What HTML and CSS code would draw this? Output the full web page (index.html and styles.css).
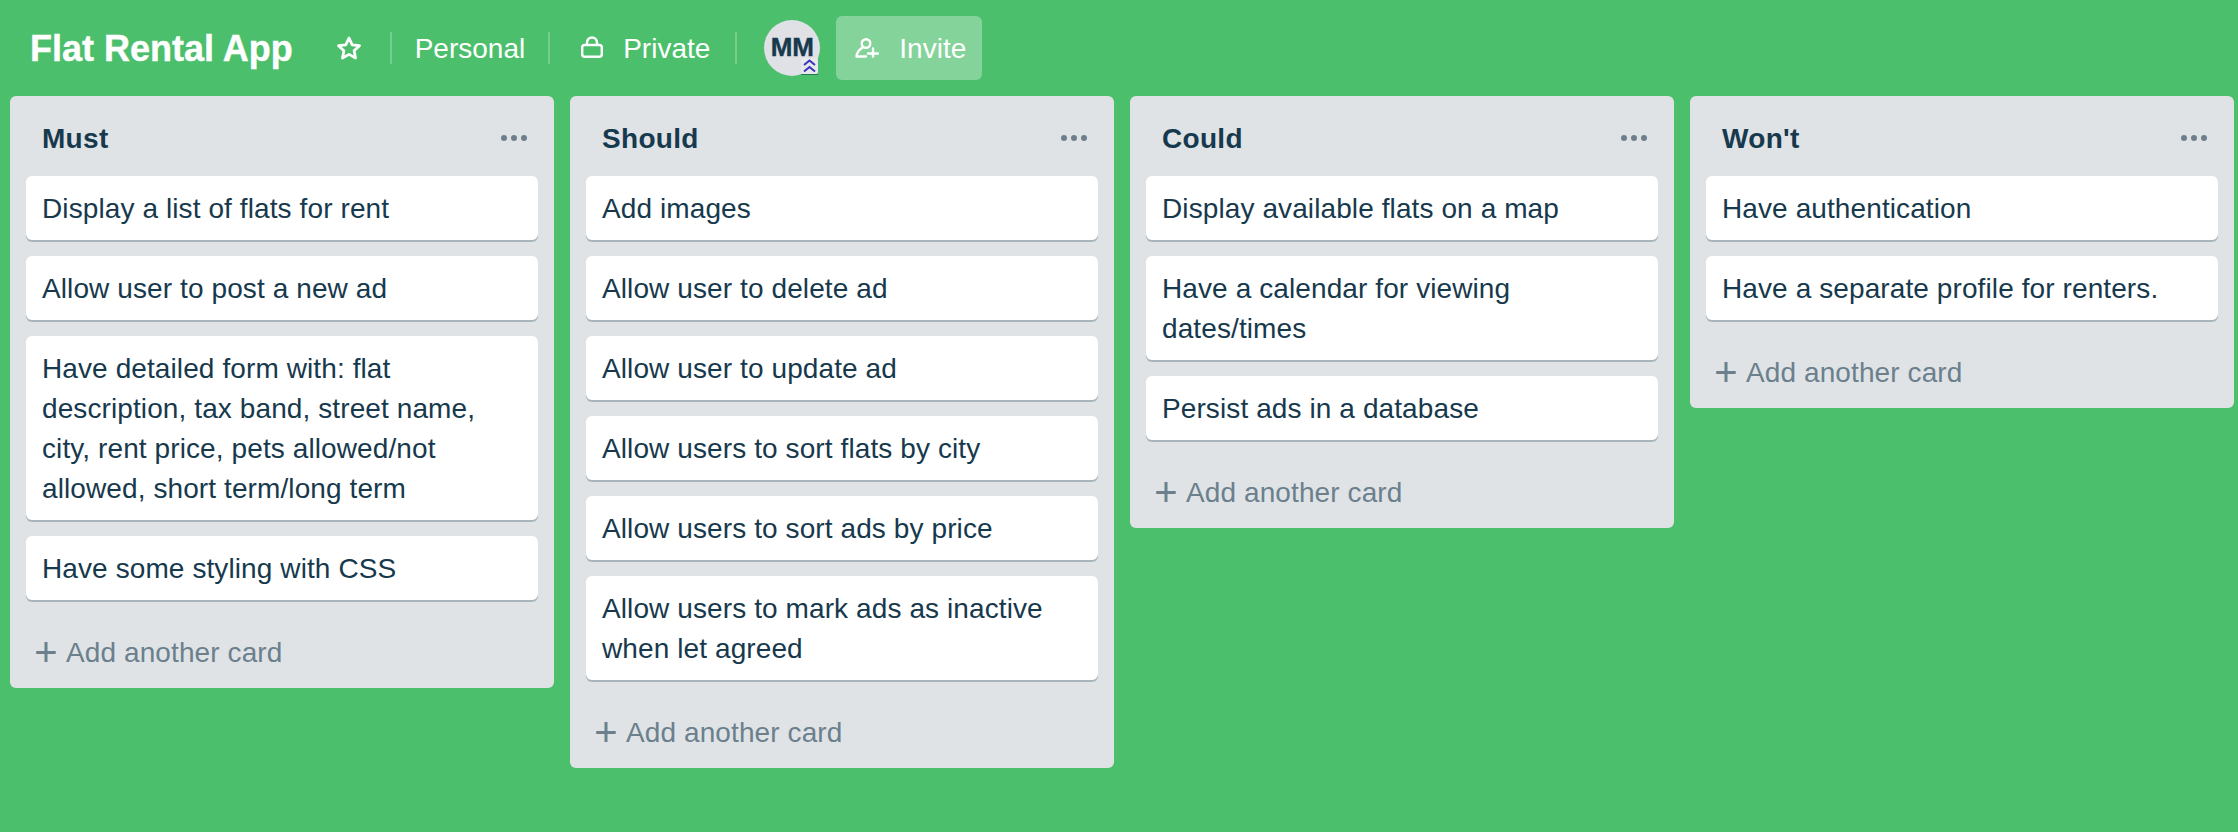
FILE: index.html
```html
<!DOCTYPE html>
<html lang="en">
<head>
  <meta charset="UTF-8">
  <title>Flat Rental App</title>
  <link rel="stylesheet" href="styles.css">
</head>
<body>
  <header class="board-header">
    <h1 class="board-title">Flat Rental App</h1>
    <svg class="icon star" viewBox="0 0 26 24"><path d="M13 2l3.200 6.800 7.300.9-5.400 5.100 1.400 7.200-6.500-3.600-6.500 3.600 1.400-7.200-5.400-5.100 7.300-.9z" fill="none" stroke="#fff" stroke-width="2.800" stroke-linejoin="round"/></svg>
    <span class="sep sep-star"></span>
    <span class="head-text personal">Personal</span>
    <span class="sep sep-personal"></span>
    <svg class="icon lock" viewBox="0 0 22 22"><rect x="1.200" y="9" width="19.600" height="11.800" rx="2.500" fill="none" stroke="#fff" stroke-width="2.400"/><path d="M6 9V6.500a5 5 0 0 1 10 0V9" fill="none" stroke="#fff" stroke-width="2.400"/></svg>
    <span class="head-text private">Private</span>
    <span class="sep sep-private"></span>
    <div class="avatar">
      MM
      <svg class="badge" viewBox="0 0 17 16"><rect width="17" height="16" rx="2" fill="#e6e8ec"/><path d="M3 7l5.500-4.500L14 7M3 13.500L8.500 9l5.500 4.500" fill="none" stroke="#3a34b8" stroke-width="2"/></svg>
    </div>
    <button class="invite">
      <svg class="icon invite-icon" viewBox="0 0 24 20"><circle cx="11" cy="5.500" r="4.300" fill="none" stroke="#fff" stroke-width="2.400"/><path d="M7.500 9.500C4 12 1.500 15 1.500 18.500h9.500M13 15.500h10M18 10.500v8" fill="none" stroke="#fff" stroke-width="2.400" stroke-linecap="round" stroke-linejoin="round"/></svg>
      <span class="invite-label">Invite</span>
    </button>
  </header>

  <main class="board">
    <section class="list">
      <div class="list-head"><h2>Must</h2><span class="dots"><i></i><i></i><i></i></span></div>
      <div class="card">Display a list of flats for rent</div>
      <div class="card">Allow user to post a new ad</div>
      <div class="card">Have detailed form with: flat description, tax band, street name, city, rent price, pets allowed/not allowed, short term/long term</div>
      <div class="card">Have some styling with CSS</div>
      <div class="add-card"><span class="plus">+</span>Add another card</div>
    </section>
    <section class="list">
      <div class="list-head"><h2>Should</h2><span class="dots"><i></i><i></i><i></i></span></div>
      <div class="card">Add images</div>
      <div class="card">Allow user to delete ad</div>
      <div class="card">Allow user to update ad</div>
      <div class="card">Allow users to sort flats by city</div>
      <div class="card">Allow users to sort ads by price</div>
      <div class="card">Allow users to mark ads as inactive when let agreed</div>
      <div class="add-card"><span class="plus">+</span>Add another card</div>
    </section>
    <section class="list">
      <div class="list-head"><h2>Could</h2><span class="dots"><i></i><i></i><i></i></span></div>
      <div class="card">Display available flats on a map</div>
      <div class="card">Have a calendar for viewing dates/times</div>
      <div class="card">Persist ads in a database</div>
      <div class="add-card"><span class="plus">+</span>Add another card</div>
    </section>
    <section class="list">
      <div class="list-head"><h2>Won't</h2><span class="dots"><i></i><i></i><i></i></span></div>
      <div class="card">Have authentication</div>
      <div class="card">Have a separate profile for renters.</div>
      <div class="add-card"><span class="plus">+</span>Add another card</div>
    </section>
  </main>
</body>
</html>
```

FILE: styles.css
```css
html, body {
  height: 100%;
}
body {
  margin: 0;
  background-color: #4bbf6b;
  font-family: "Liberation Sans", Arial, sans-serif;
  color: #172b4d;
  overflow: hidden;
}
.board-header {
  display: flex;
  align-items: center;
  height: 64px;
  padding: 16px 0 16px 30px;
  color: #fff;
}
.board-title {
  margin: 2px 0 0;
  font-size: 36px;
  font-weight: bold;
  line-height: 40px;
  -webkit-text-stroke: 0.4px #fff;
}
.icon {
  flex: none;
}
.star {
  width: 26px;
  height: 24px;
  margin-left: 43px;
}
.sep {
  width: 2px;
  height: 32px;
  background-color: rgba(255, 255, 255, 0.24);
}
.sep-star {
  margin-left: 28px;
}
.head-text {
  margin-top: 2px;
  font-size: 28px;
}
.personal {
  margin-left: 23px;
}
.sep-personal {
  margin-left: 23px;
}
.lock {
  width: 22px;
  height: 22px;
  margin: -2px 0 0 31px;
}
.private {
  margin-left: 20px;
}
.sep-private {
  margin-left: 25px;
}
.avatar {
  position: relative;
  width: 56px;
  height: 56px;
  margin-left: 27px;
  border-radius: 50%;
  background-color: #dfe1e6;
  color: #17394d;
  font-size: 26px;
  font-weight: bold;
  line-height: 54px;
  text-align: center;
  -webkit-text-stroke: 0.4px #17394d;
}
.badge {
  position: absolute;
  right: 2px;
  bottom: 2px;
  width: 17px;
  height: 16px;
  display: block;
  box-shadow: 0 1px 0 rgba(9, 45, 66, 0.5);
}
.invite {
  display: flex;
  align-items: center;
  width: 146px;
  height: 64px;
  margin-left: 16px;
  padding: 0 0 0 19px;
  border: 0;
  border-radius: 6px;
  background-color: rgba(255, 255, 255, 0.32);
  color: #fff;
  font-family: inherit;
  font-size: 28px;
}
.invite-icon {
  width: 24px;
  height: 20px;
  margin-right: 20px;
}
.invite-label {
  margin-top: 2px;
}
.board {
  display: flex;
  align-items: flex-start;
  gap: 16px;
  padding: 0 10px;
}
.list {
  flex: none;
  width: 544px;
  padding: 0 16px;
  box-sizing: border-box;
  border-radius: 6px;
  background-color: #dfe3e6;
}
.list-head {
  display: flex;
  justify-content: space-between;
  height: 80px;
  padding: 23px 11px 0 16px;
  box-sizing: border-box;
}
.list-head h2 {
  margin: 0;
  font-size: 28px;
  letter-spacing: 0.3px;
  line-height: 40px;
  color: #17394d;
}
.dots {
  display: flex;
  gap: 4px;
  margin-top: 16px;
}
.dots i {
  width: 6px;
  height: 6px;
  border-radius: 50%;
  background-color: #6b808c;
}
.card {
  margin-bottom: 16px;
  padding: 13px 16px 11px;
  border-radius: 6px;
  background-color: #fff;
  box-shadow: 0 2px 0 rgba(9, 45, 66, 0.25);
  font-size: 28px;
  letter-spacing: 0.1px;
  line-height: 40px;
  color: #17394d;
}
.add-card {
  display: flex;
  align-items: center;
  height: 72px;
  padding: 2px 0 0 8px;
  box-sizing: border-box;
  color: #6b808c;
  font-size: 28px;
  letter-spacing: 0.1px;
}
.plus {
  width: 24px;
  margin: -2px 8px 0 0;
  font-size: 40px;
  font-weight: normal;
  line-height: 36px;
  text-align: center;
}
```
